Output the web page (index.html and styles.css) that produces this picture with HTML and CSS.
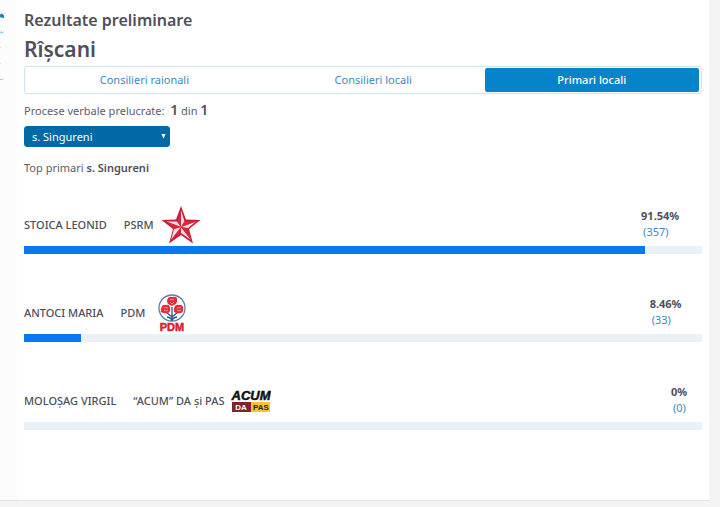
FILE: index.html
```html
<!DOCTYPE html>
<html lang="ro">

<head>
  <meta charset="utf-8">
  <meta name="viewport" content="width=device-width, initial-scale=1.0" />
  <title>Rezultate preliminare</title>
  <link rel="stylesheet" href="styles.css">
</head>

<body>
  <div class="page">
    <aside class="map">
      <svg viewBox="0 0 17 90" width="17" height="90" aria-hidden="true">
        <path d="M0 14.500l2-1 2 2v3l-1-1-1 .5-2-1z" fill="#1684bd" />
        <path d="M0 32.500h3.500M1.500 31v3" stroke="#9fd0ea" fill="none" />
        <path d="M0 47.500h1M0 63.500h1" stroke="#e3e8ea" />
        <path d="M0 79.500h3" stroke="#bfc5c8" />
      </svg>
    </aside>
    <main class="content">
      <h2>Rezultate preliminare</h2>
      <h1>Rîşcani</h1>
      <nav class="tabs">
        <a href="#raionali">Consilieri raionali</a>
        <a href="#locali">Consilieri locali</a>
        <a href="#primari" class="active">Primari locali</a>
      </nav>
      <p class="processed">Procese verbale prelucrate: &nbsp;<b>1</b> din <b>1</b></p>
      <div class="picker">
        <select aria-label="Localitate">
          <option>s. Singureni</option>
        </select>
        <svg class="arrow" viewBox="0 0 5 5" width="5" height="5" aria-hidden="true">
          <path d="M.5 0h4L2.500 4.500z" fill="#fff" />
        </svg>
      </div>
      <p class="top">Top primari <b>s. Singureni</b></p>

      <section class="candidate">
        <div class="info">
          <span class="name">STOICA LEONID</span>
          <span class="party">PSRM</span>
          <svg class="logo" viewBox="0 0 40 38" role="img" aria-label="PSRM">
            <path d="M20 0l5 13.500 14.500.5-11.500 9 4 14.500-12-8.500-12 8.500 4-14.500L.5 14l14.500-.5z" fill="#c41f35" />
            <path d="M20 4l3.500 11.500L20 21zM35 15.500l-8 6.500L20 21zM30 34l-10-7V21zM10 34l3-11 7-2zM5 15.500h11l4 5.500z" fill="#fff" opacity=".85" />
            <path d="M20 4v17l-3.500-5.500zM35 15.500L20 21l3.500-5.500zM30 34L20 21l7 1.500zM10 34l10-13v6zM5 15.500L20 21l-7 2z" fill="#d8263c" />
          </svg>
          <div class="result">
            <div><b>91.54%</b><a href="#psrm">(357)</a></div>
          </div>
        </div>
        <div class="bar"><div class="fill" style="width: 91.54%"></div></div>
      </section>

      <section class="candidate">
        <div class="info">
          <span class="name">ANTOCI MARIA</span>
          <span class="party">PDM</span>
          <svg class="logo small" viewBox="0 0 30 38" role="img" aria-label="PDM">
            <circle cx="15" cy="14" r="13" fill="#fff" stroke="#6579a5" stroke-width="1.300" />
            <path d="M15 13v14M15 23l-6-5M15 23l6-5M10 23q3 0 5 3 2-3 5-3" fill="none" stroke="#34568f" stroke-width="1.300" />
            <g fill="#e02e3c">
              <path d="M11 4q2-2 4-1 3-1 5 1 1 3-1 6l-4 2-4-2q-2-3 0-6z" />
              <path d="M5 12q2-2 4-1 3-1 4 2 1 5-2 6-4 1-7-1-1-3 1-6z" />
              <path d="M18 12q2-2 4-1 3-1 4 2 1 5-2 6-4 1-7-1-1-3 1-6z" />
            </g>
            <path d="M13 6q2-2 4 0M13 8l2 2 2-2M7 14q2-1 4 0M7 16l2 1 2-1M20 14q2-1 4 0M20 16l2 1 2-1" fill="none" stroke="#f7a6a9" stroke-width=".8" />
            <text x="15" y="37" text-anchor="middle" class="pdm">PDM</text>
          </svg>
          <div class="result">
            <div><b>8.46%</b><a href="#pdm">(33)</a></div>
          </div>
        </div>
        <div class="bar"><div class="fill" style="width: 8.46%"></div></div>
      </section>

      <section class="candidate">
        <div class="info">
          <span class="name">MOLOȘAG VIRGIL</span>
          <span class="party">“ACUM” DA și PAS</span>
          <svg class="logo" viewBox="0 0 40 38" role="img" aria-label="ACUM DA PAS">
            <text x="20" y="18" text-anchor="middle" class="acum">ACUM</text>
            <path d="M1 20h19v10H1z" fill="#7c2430" />
            <path d="M20 20h19v10H20z" fill="#f3c62c" />
            <text x="10" y="28" text-anchor="middle" class="da">DA</text>
            <text x="30" y="28" text-anchor="middle" class="pas">PAS</text>
          </svg>
          <div class="result">
            <div><b>0%</b><a href="#acum">(0)</a></div>
          </div>
        </div>
        <div class="bar"><div class="fill" style="width: 0%"></div></div>
      </section>
    </main>
  </div>
</body>

</html>
```
FILE: styles.css
```css
* {
  box-sizing: border-box;
}

body {
  margin: 0;
  background-color: #f4f4f4;
  color: #5d5d68;
  font-family: "Noto Sans", "Open Sans", sans-serif;
  font-size: 11px;
  line-height: 16px;
}

a {
  color: #4288bd;
  text-decoration: none;
}

b {
  color: #4e4e59;
  font-weight: 600;
}

.page {
  display: flex;
  margin-right: 11px;
  background-color: #fff;
  border-bottom: 1px solid #e4e4e4;
}

.map {
  flex: none;
  width: 17px;
  background-color: #fcfcfc;
}

.content {
  flex: 1;
  padding: 8px 7px 70px;
}

h1,
h2 {
  margin: 0;
  color: #50505a;
  font-weight: 600;
}

h2 {
  font-size: 16px;
  line-height: 24px;
}

h1 {
  font-size: 21px;
  line-height: 34px;
}

.tabs {
  display: flex;
  height: 28px;
  padding: 1px 2px;
  border: 1px solid #cfe5ee;
  border-radius: 3px;
}

.tabs a {
  flex: 1 1 auto;
  border-radius: 2px;
  line-height: 24px;
  text-align: center;
}

.tabs .active {
  background-color: #0783c9;
  color: #fff;
  font-weight: 500;
}

.processed {
  margin: 8px 0 7px;
}

.processed b {
  font-size: 14px;
}

.picker {
  position: relative;
  width: 146px;
}

.picker select {
  display: block;
  width: 100%;
  height: 21px;
  padding: 0 7px;
  border: 1px solid #0069a6;
  border-radius: 3px;
  appearance: none;
  background-color: #0069a6;
  color: #fff;
  font: inherit;
}

.arrow {
  position: absolute;
  top: 8px;
  right: 4px;
}

.top {
  margin: 13px 0 28px;
}

.candidate {
  margin-bottom: 38px;
}

.candidate:last-child {
  margin-bottom: 0;
}

.info {
  display: flex;
  align-items: center;
  height: 42px;
}

.name,
.party {
  color: #4e4e59;
  font-weight: 500;
}

.name {
  margin-right: 17px;
}

.logo {
  width: 40px;
  height: 38px;
  margin-left: 7px;
}

.logo.small {
  width: 30px;
  margin-left: 12px;
}

.pdm,
.acum,
.da,
.pas {
  font-family: "Liberation Sans", sans-serif;
  font-weight: bold;
}

.pdm {
  fill: #d9202c;
  stroke: #d9202c;
  stroke-width: 0.5px;
  font-size: 11px;
}

.acum {
  fill: #111;
  stroke: #111;
  stroke-width: 0.5px;
  font-size: 13px;
  font-style: italic;
}

.da,
.pas {
  fill: #fff;
  font-size: 8px;
}

.pas {
  fill: #222;
}

.result {
  width: max-content;
  margin: 0 9px 2px auto;
}

/* wider figures sit further from the end of the bar */
.result div {
  margin-left: -36%;
}

.result b,
.result a {
  display: block;
}

.result b {
  font-weight: 700;
}

.result a {
  padding-left: 2px;
}

.bar {
  height: 8px;
  background-color: #e9f1f9;
}

.fill {
  height: 100%;
  background-color: #077af0;
}
```
